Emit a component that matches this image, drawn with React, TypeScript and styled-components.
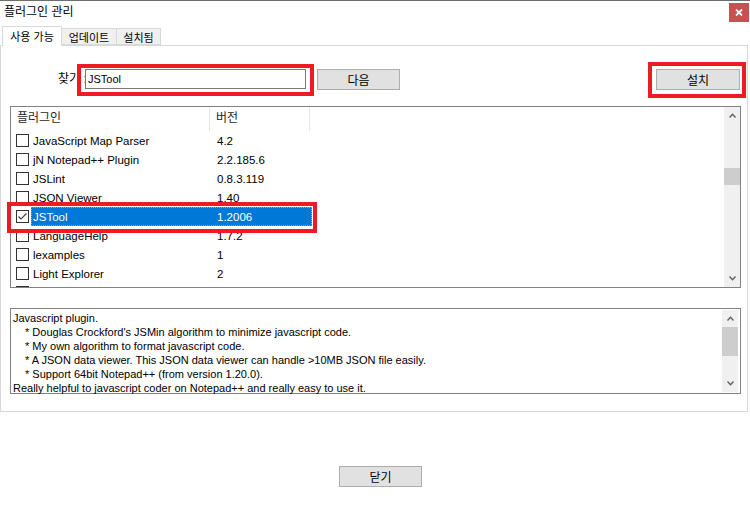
import styled, { createGlobalStyle } from 'styled-components'

const GlobalStyle = createGlobalStyle`
  html, body {
    margin: 0;
    padding: 0;
    background: #ffffff;
  }
  body {
    font-family: 'Liberation Sans', 'Noto Sans CJK KR', sans-serif;
    color: #000000;
  }
  * {
    box-sizing: border-box;
  }
`

const UI_FONT = `'Liberation Sans', 'Noto Sans CJK KR', sans-serif`

interface Plugin {
  name: string
  version: string
  checked?: boolean
  selected?: boolean
}

// the last row is scrolled almost out of view, only its checkbox edge shows
const plugins: Plugin[] = [
  { name: 'JavaScript Map Parser', version: '4.2' },
  { name: 'jN Notepad++ Plugin', version: '2.2.185.6' },
  { name: 'JSLint', version: '0.8.3.119' },
  { name: 'JSON Viewer', version: '1.40' },
  { name: 'JSTool', version: '1.2006', checked: true, selected: true },
  { name: 'LanguageHelp', version: '1.7.2' },
  { name: 'lexamples', version: '1' },
  { name: 'Light Explorer', version: '2' },
  { name: '', version: '' },
]

const description = [
  { text: 'Javascript plugin.', indent: false },
  { text: "* Douglas Crockford's JSMin algorithm to minimize javascript code.", indent: true },
  { text: '* My own algorithm to format javascript code.', indent: true },
  { text: '* A JSON data viewer. This JSON data viewer can handle >10MB JSON file easily.', indent: true },
  { text: '* Support 64bit Notepad++ (from version 1.20.0).', indent: true },
  { text: 'Really helpful to javascript coder on Notepad++ and really easy to use it.', indent: false },
]

const Chevron = ({ up }: { up?: boolean }) => (
  <svg width="7" height="5" viewBox="0 0 7 5">
    <polyline
      points={up ? '0.5,4.5 3.5,1.2 6.5,4.5' : '0.5,0.5 3.5,3.8 6.5,0.5'}
      fill="none"
      stroke="#606060"
      strokeWidth="1.4"
    />
  </svg>
)

const CheckBox = ({ checked }: { checked?: boolean }) => (
  <Box>
    {checked && (
      <svg width="11" height="11" viewBox="0 0 11 11">
        <polyline points="1.5,5.5 4,8 9.5,2.5" fill="none" stroke="#444" strokeWidth="1.2" />
      </svg>
    )}
  </Box>
)

interface ScrollBarProps {
  thumbOffset: number
  thumbHeight: number
}

const ScrollBar = ({ thumbOffset, thumbHeight }: ScrollBarProps) => (
  <Scroll>
    <ScrollArrow>
      <Chevron up />
    </ScrollArrow>
    <Track>
      <Thumb $offset={thumbOffset} $height={thumbHeight} />
    </Track>
    <ScrollArrow>
      <Chevron />
    </ScrollArrow>
  </Scroll>
)

export default function App() {
  return (
    <>
      <GlobalStyle />
      <Window>
        <TitleBar>
          <Title>플러그인 관리</Title>
          <CloseButton>
            <svg width="8" height="7" viewBox="0 0 8 7">
              <path d="M1 0.5 L7 6.5 M7 0.5 L1 6.5" stroke="#fff" strokeWidth="1.8" />
            </svg>
          </CloseButton>
        </TitleBar>

        <TabStrip>
          <Tab $active $width={60}>사용 가능</Tab>
          <Tab $width={55}>업데이트</Tab>
          <Tab $width={45}>설치됨</Tab>
        </TabStrip>

        <Panel>
          <SearchRow>
            <SearchLabel>찾기 :</SearchLabel>
            <SearchInput defaultValue="JSTool" />
            <NextButton>다음</NextButton>
            <Spacer />
            <InstallButton>설치</InstallButton>
          </SearchRow>

          <PluginList>
            <ListMain>
              <ListHeader>
                <HeaderCell $width={199}>플러그인</HeaderCell>
                <HeaderCell $width={100}>버전</HeaderCell>
              </ListHeader>
              {plugins.map((p, i) => (
                <Row key={i}>
                  <CheckBox checked={p.checked} />
                  <RowBody $selected={p.selected}>
                    <NameCell>{p.name}</NameCell>
                    <span>{p.version}</span>
                  </RowBody>
                </Row>
              ))}
            </ListMain>
            <ScrollBar thumbOffset={44} thumbHeight={17} />
          </PluginList>

          <Description>
            <DescText>
              {description.map((line, i) => (
                <DescLine key={i} $indent={line.indent}>
                  {line.text}
                </DescLine>
              ))}
            </DescText>
            <ScrollBar thumbOffset={0} thumbHeight={29} />
          </Description>
        </Panel>

        <Footer>
          <FooterButton>닫기</FooterButton>
        </Footer>

        <Annotation $x={77} $y={63} $w={237} $h={32} />
        <Annotation $x={648} $y={61} $w={98} $h={36} />
        <Annotation $x={7} $y={201} $w={310} $h={31} />
      </Window>
    </>
  )
}

const Window = styled.div`
  position: relative;
  display: flex;
  flex-direction: column;
  width: 750px;
  height: 514px;
  border-top: 1px solid #6d6d6d;
  background: #ffffff;
  overflow: hidden;
`

const TitleBar = styled.div`
  display: flex;
  justify-content: space-between;
  height: 24px;
  padding-left: 4px;
`

const Title = styled.span`
  font-family: ${UI_FONT};
  font-size: 12px;
  line-height: 23px;
  color: #000;
`

const CloseButton = styled.div`
  display: flex;
  align-items: center;
  justify-content: center;
  width: 20px;
  height: 19px;
  margin-top: 2px;
  margin-right: 1px;
  background: #c75050;
`

const TabStrip = styled.div`
  display: flex;
  align-items: flex-end;
  height: 21px;
  padding-left: 2px;
  margin-bottom: -1px;
  position: relative;
  z-index: 1;
`

const Tab = styled.div<{ $active?: boolean; $width: number }>`
  display: flex;
  align-items: center;
  justify-content: center;
  width: ${(p) => p.$width}px;
  height: ${(p) => (p.$active ? 20 : 17)}px;
  margin-bottom: ${(p) => (p.$active ? 0 : 1)}px;
  margin-left: ${(p) => (p.$active ? 0 : -1)}px;
  padding-bottom: ${(p) => (p.$active ? 2 : 0)}px;
  border: 1px solid #d9d9d9;
  border-bottom: ${(p) => (p.$active ? 'none' : '1px solid #d9d9d9')};
  background: ${(p) => (p.$active ? '#ffffff' : '#f0f0f0')};
  font-family: ${UI_FONT};
  font-size: 11px;
  color: #000;
  &:nth-child(2) {
    margin-left: 0;
    border-left: none;
  }
`

const Panel = styled.div`
  display: flex;
  flex-direction: column;
  width: 748px;
  height: 367px;
  padding: 0 6px 0 9px;
  border: 1px solid #d9d9d9;
`

const SearchRow = styled.div`
  display: flex;
  align-items: flex-start;
  height: 21px;
  margin-top: 23px;
  padding-left: 48px;
`

const SearchLabel = styled.span`
  width: 27px;
  font-family: ${UI_FONT};
  font-size: 12px;
  line-height: 20px;
  white-space: nowrap;
`

const SearchInput = styled.input`
  width: 221px;
  height: 20px;
  padding: 0 2px;
  border: 1px solid #7a7a7a;
  outline: none;
  font-family: ${UI_FONT};
  font-size: 11px;
  color: #000;
`

const PushButton = styled.button`
  height: 21px;
  padding: 0;
  border: 1px solid #adadad;
  background: #e1e1e1;
  font-family: ${UI_FONT};
  font-size: 12px;
  color: #000;
`

const NextButton = styled(PushButton)`
  width: 83px;
  margin-left: 11px;
`

const InstallButton = styled(PushButton)`
  width: 84px;
  margin-right: 1px;
`

const Spacer = styled.div`
  flex: 1;
`

const PluginList = styled.div`
  display: flex;
  height: 182px;
  margin-top: 16px;
  border: 1px solid #828282;
`

const ListMain = styled.div`
  flex: 1;
  overflow: hidden;
`

const ListHeader = styled.div`
  display: flex;
  height: 24px;
`

const HeaderCell = styled.div<{ $width: number }>`
  width: ${(p) => p.$width}px;
  padding-left: 6px;
  border-right: 1px solid #e5e5e5;
  font-family: ${UI_FONT};
  font-size: 12px;
  line-height: 22px;
  color: #1e1e1e;
`

const Row = styled.div`
  display: flex;
  align-items: center;
  height: 19px;
  padding-left: 5px;
`

const Box = styled.div`
  display: flex;
  align-items: center;
  justify-content: center;
  width: 13px;
  height: 13px;
  margin-right: 2px;
  border: 1px solid #333333;
  background: #ffffff;
`

const RowBody = styled.div<{ $selected?: boolean }>`
  display: flex;
  align-items: center;
  width: 281px;
  height: 19px;
  padding-left: 2px;
  font-family: ${UI_FONT};
  font-size: 11.5px;
  color: ${(p) => (p.$selected ? '#ffffff' : '#000000')};
  background: ${(p) => (p.$selected ? '#0078d7' : 'transparent')};
  outline: ${(p) => (p.$selected ? '1px dotted #ff8728' : 'none')};
  outline-offset: -1px;
`

const NameCell = styled.span`
  width: 184px;
  white-space: nowrap;
`

const Scroll = styled.div`
  display: flex;
  flex-direction: column;
  width: 16px;
  background: #f0f0f0;
`

const ScrollArrow = styled.div`
  display: flex;
  align-items: center;
  justify-content: center;
  height: 17px;
`

const Track = styled.div`
  flex: 1;
`

const Thumb = styled.div<{ $offset: number; $height: number }>`
  height: ${(p) => p.$height}px;
  margin-top: ${(p) => p.$offset}px;
  background: #cdcdcd;
`

const Description = styled.div`
  display: flex;
  height: 86px;
  margin-top: 20px;
  padding: 1px 2px 1px 0;
  border: 1px solid #828282;
`

const DescText = styled.div`
  flex: 1;
  padding: 1px 0 0 2px;
  font-family: ${UI_FONT};
  font-size: 11px;
  line-height: 14px;
  color: #000;
`

const DescLine = styled.div<{ $indent?: boolean }>`
  padding-left: ${(p) => (p.$indent ? 12 : 0)}px;
  white-space: nowrap;
`

const Footer = styled.div`
  display: flex;
  justify-content: center;
  padding-top: 54px;
  padding-left: 11px;
`

const FooterButton = styled(PushButton)`
  width: 83px;
`

const Annotation = styled.div<{ $x: number; $y: number; $w: number; $h: number }>`
  position: absolute;
  left: ${(p) => p.$x}px;
  top: ${(p) => p.$y}px;
  width: ${(p) => p.$w}px;
  height: ${(p) => p.$h}px;
  border: 4px solid #ed1c24;
  pointer-events: none;
`
